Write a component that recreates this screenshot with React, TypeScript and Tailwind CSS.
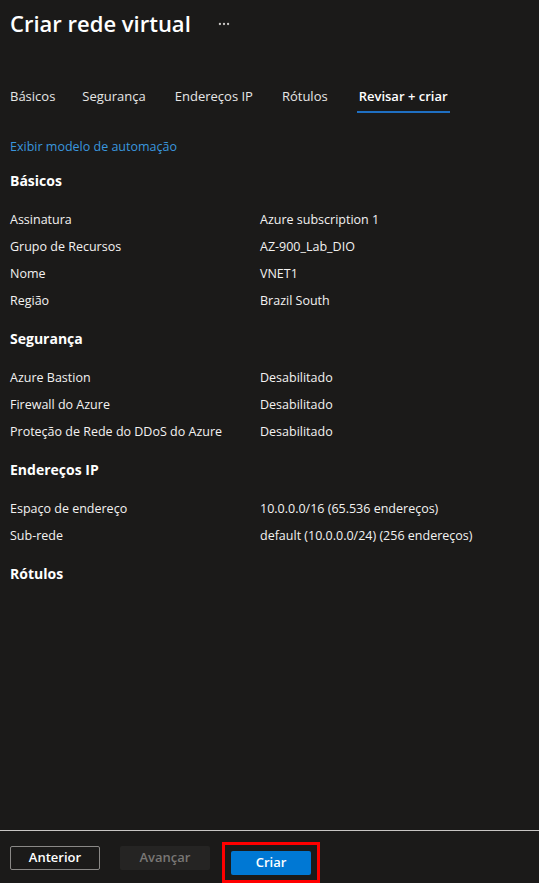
import { MoreHorizontal } from 'lucide-react';

const sections = [
    {
        title: 'Básicos',
        rows: [
            ['Assinatura', 'Azure subscription 1'],
            ['Grupo de Recursos', 'AZ-900_Lab_DIO'],
            ['Nome', 'VNET1'],
            ['Região', 'Brazil South'],
        ],
    },
    {
        title: 'Segurança',
        rows: [
            ['Azure Bastion', 'Desabilitado'],
            ['Firewall do Azure', 'Desabilitado'],
            ['Proteção de Rede do DDoS do Azure', 'Desabilitado'],
        ],
    },
    {
        title: 'Endereços IP',
        rows: [
            ['Espaço de endereço', '10.0.0.0/16 (65.536 endereços)'],
            ['Sub-rede', 'default (10.0.0.0/24) (256 endereços)'],
        ],
    },
    {
        title: 'Rótulos',
        rows: [],
    },
];

const tabs = ['Básicos', 'Segurança', 'Endereços IP', 'Rótulos', 'Revisar + criar'];

export default function App() {
    return (
        <div
            className="h-[883px] w-[539px] bg-[#1b1a19] text-[#f3f2f1] flex flex-col"
            style={{ fontFamily: '"Open Sans", "Noto Sans", sans-serif' }}
        >
            <div className="flex-1 px-[10px]">
                <div className="flex items-center h-[46px]">
                    <h1 className="text-[22px] font-semibold text-white leading-none">
                        Criar rede virtual
                    </h1>
                    <MoreHorizontal size={14} className="ml-[26px] mt-[2px] text-[#c8c6c4]" />
                </div>

                <div className="flex mt-[41px] text-[13px] h-[32px]">
                    {tabs.map((tab, i) => (
                        <div
                            key={tab}
                            className={`relative ${i === 4 ? 'font-semibold text-white' : 'text-[#e6e6e6]'} ${
                                i === 0 ? 'mr-[27px]' : i === 4 ? '' : 'mr-[29px]'
                            }`}
                        >
                            <span className={i === 4 ? 'px-[2px]' : ''}>{tab}</span>
                            {i === 4 && (
                                <div className="absolute left-0 right-0 top-[24px] h-[2px] bg-[#1f6fc2]" />
                            )}
                        </div>
                    ))}
                </div>

                <div className="mt-[19px] mb-[12px] text-[12.5px] text-[#3a96dd]">
                    Exibir modelo de automação
                </div>

                {sections.map((s) => (
                    <div key={s.title} className="mt-[8px]">
                        <h2 className="text-[14px] font-bold text-white h-[24px] leading-[24px]">
                            {s.title}
                        </h2>
                        <div className="mt-[18px] flex flex-col text-[12.5px] text-[#f3f2f1]">
                            {s.rows.map(([k, v]) => (
                                <div key={k} className="flex h-[27px] items-start leading-[18px]">
                                    <div className="w-[250px]">{k}</div>
                                    <div>{v}</div>
                                </div>
                            ))}
                        </div>
                    </div>
                ))}
            </div>

            <div className="h-[1px] bg-[#c8c6c4]" />
            <div className="h-[52px] flex items-center px-[10px] gap-[20px] text-[13px] font-semibold">
                <button className="w-[90px] h-[24px] border border-[#8a8886] text-white rounded-[2px] mt-[1px]">
                    Anterior
                </button>
                <button className="w-[90px] h-[24px] bg-[#252423] text-[#797775] rounded-[2px] mt-[1px]">
                    Avançar
                </button>
                <div className="-ml-[8px] border-[3px] border-[#ff0000] px-[6px] pt-[6px] pb-[5px] mt-[11px]">
                    <button className="w-[80px] h-[24px] bg-[#0078d4] text-white rounded-[2px]">
                        Criar
                    </button>
                </div>
            </div>
        </div>
    );
}
